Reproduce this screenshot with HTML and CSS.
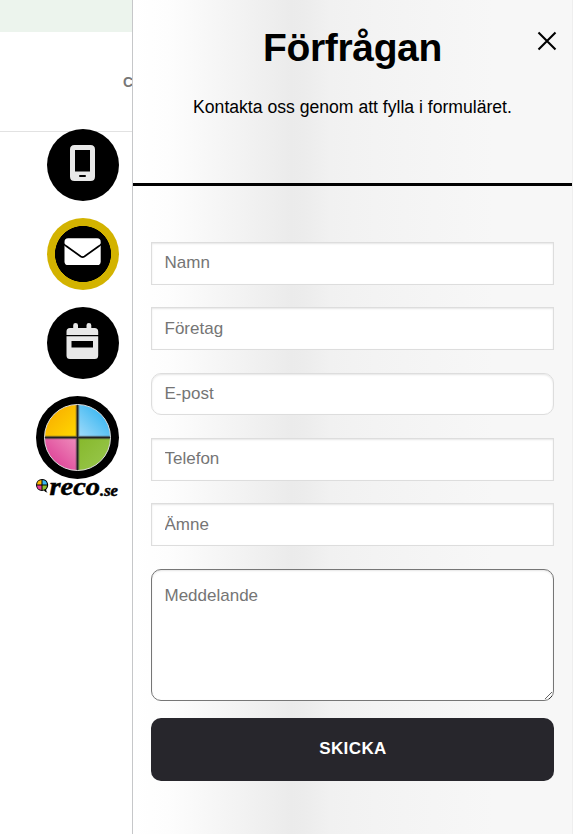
FILE: index.html
```html
<!DOCTYPE html>
<html lang="sv">
<head>
<meta charset="utf-8">
<title>Förfrågan</title>
<link rel="stylesheet" href="styles.css">
</head>
<body>
<div class="page">
  <div class="side">
    <div class="topbar"></div>
    <header class="nav"><span class="nav-link">C</span></header>
    <nav class="actions">
      <a class="action" aria-label="Telefon">
        <svg width="72" height="72" viewBox="0 0 72 72">
          <path fill="#e8e8e8" fill-rule="evenodd" d="M27.500 16h16q4.500 0 4.500 4.500v27q0 4.500-4.500 4.500h-16q-4.500 0-4.500-4.500v-27q0-4.500 4.500-4.500zM28 21v21.500h15V21zM33 46q-1 0-1 1t1 1h5q1 0 1-1t-1-1z"/>
        </svg>
      </a>
      <a class="action action-active" aria-label="E-post">
        <svg width="72" height="72" viewBox="0 0 72 72">
          <rect x="17.500" y="20.300" width="36.200" height="26.700" rx="3.600" fill="#fff"/>
          <path fill="none" stroke="#000" stroke-width="1.700" d="M16.800 26 Q18 27.300 19.500 28.300L33.800 38.500q1.800 1.200 3.600 0L51.700 28.300Q53.200 27.300 54.400 26"/>
        </svg>
      </a>
      <a class="action" aria-label="Kalender">
        <svg width="72" height="72" viewBox="0 0 72 72">
          <path fill="#e8e8e8" d="M26.200 21v-2.700q0-2.300 2.400-2.300t2.400 2.300V21h8.500v-2.700q0-2.300 2.400-2.300t2.400 2.300V21h3.200q3.700 0 3.700 3.500V28H19.500v-3.500q0-3.500 3.500-3.500z"/>
          <path fill="#e8e8e8" fill-rule="evenodd" d="M19.500 29.200H51.200V48.500q0 3.500-3.500 3.500H23q-3.500 0-3.500-3.500zM24.500 34v6.500h21.500V34z"/>
        </svg>
      </a>
      <a class="reco" aria-label="Reco">
        <svg width="84" height="104" viewBox="0 0 84 104">
          <defs>
            <linearGradient id="y" x1="0" y1="0" x2="1" y2="1"><stop offset=".2" stop-color="#f9b000"/><stop offset="1" stop-color="#ffda00"/></linearGradient>
            <linearGradient id="b" x1="0" y1="1" x2="1" y2="0"><stop offset="0" stop-color="#a5dcfa"/><stop offset=".8" stop-color="#38b6f1"/></linearGradient>
            <linearGradient id="p" x1="0" y1="1" x2="1" y2="0"><stop offset=".2" stop-color="#de4297"/><stop offset="1" stop-color="#ef8fbd"/></linearGradient>
            <linearGradient id="g" x1="0" y1="0" x2="1" y2="1"><stop offset="0" stop-color="#86b82b"/><stop offset="1" stop-color="#9ac850"/></linearGradient>
          </defs>
          <circle cx="41.500" cy="41.500" r="41.500"/>
          <path fill="url(#y)" d="M41.500 41.500V8.500a33 33 0 0 0-33 33z"/>
          <path fill="url(#b)" d="M41.500 41.500h33a33 33 0 0 0-33-33z"/>
          <path fill="url(#p)" d="M41.500 41.500h-33a33 33 0 0 0 33 33z"/>
          <path fill="url(#g)" d="M41.500 41.500v33a33 33 0 0 0 33-33z"/>
          <path stroke="#444" stroke-opacity=".55" stroke-width="3.600" d="M41.500 8.500v66M8.500 41.500h66"/>
          <path stroke="#222" stroke-width="1.500" d="M41.500 8.500v66M8.500 41.500h66"/>
          <circle cx="41.500" cy="41.500" r="33" fill="none" stroke="#ddd" stroke-width="1"/>
          <path d="M6 83a6 6 0 0 0 0 12q1 0 2-.4 1 2 3.500 1.800-1.500-1-1.300-3A6 6 0 0 0 6 83z"/>
          <path fill="#ffb800" d="M5.500 88.500V84A4.800 4.800 0 0 0 1 88.500z"/>
          <path fill="#38b6f1" d="M6.500 88.500H11A4.800 4.800 0 0 0 6.500 84z"/>
          <path fill="#e83e97" d="M5.500 89.500H1A4.800 4.800 0 0 0 5.500 94z"/>
          <path fill="#8ec02f" d="M6.500 89.500V94A4.800 4.800 0 0 0 11 89.500z"/>
          <text class="reco-name" x="13.500" y="99" textLength="50.500" lengthAdjust="spacingAndGlyphs">reco</text>
          <text class="reco-tld" x="64" y="99.500" textLength="18" lengthAdjust="spacingAndGlyphs">.se</text>
        </svg>
      </a>
    </nav>
  </div>
  <main class="panel">
    <div class="intro">
      <h1>Förfrågan</h1>
      <p>Kontakta oss genom att fylla i formuläret.</p>
      <button class="close" aria-label="Stäng">
        <svg width="20" height="20" viewBox="0 0 20 20"><path d="M1.500 1.500l17 17M18.500 1.500l-17 17" stroke="#000" stroke-width="2.100"/></svg>
      </button>
    </div>
    <form class="form">
      <input class="field" type="text" placeholder="Namn">
      <input class="field field-low" type="text" placeholder="Företag">
      <input class="field field-low field-email" type="email" placeholder="E-post">
      <input class="field" type="text" placeholder="Telefon">
      <input class="field field-low" type="text" placeholder="Ämne">
      <textarea class="field message" placeholder="Meddelande"></textarea>
      <button class="submit" type="button">SKICKA</button>
    </form>
  </main>
</div>
</body>
</html>
```
FILE: styles.css
```css
* { box-sizing: border-box; }
body {
  margin: 0;
  background: #fff;
  font-family: "Liberation Sans", Arial, sans-serif;
}
.page {
  display: flex;
  height: 834px;
  overflow: hidden;
}
.side {
  flex: 0 0 132px;
  overflow: hidden;
}
.topbar {
  height: 32px;
  background: #ecf4ed;
}
.nav {
  display: flex;
  align-items: center;
  height: 100px;
  padding-left: 123px;
  border-bottom: 1px solid #e2e2e2;
  white-space: nowrap;
}
.nav-link {
  color: #777;
  font-size: 14px;
  font-weight: 700;
}
.actions {
  display: flex;
  flex-direction: column;
  align-items: flex-end;
  gap: 17px;
  margin-top: -3px;
  padding-right: 13px;
}
.action {
  position: relative;
  width: 72px;
  height: 72px;
  border-radius: 50%;
  background: #000;
}
.action svg, .reco svg { display: block; }
.action-active { background: radial-gradient(circle, #000 27.700px, #d3b300 28.300px); }
.reco { margin-right: -1px; }
.reco-name, .reco-tld {
  font-family: "Liberation Serif", serif;
  font-style: italic;
  font-weight: 700;
  stroke: #000;
  stroke-width: .5px;
}
.reco-name { font-size: 26px; }
.reco-tld { font-size: 17px; }
.panel {
  flex: 1;
  border-left: 1px solid #c6c7c9;
  border-right: 1px solid #eee;
  background: linear-gradient(90deg, #fff 0%, #fdfdfd 8%, #f3f3f3 24%, #ebebeb 36%, #ececec 39%, #f1f1f1 45%, #f3f3f3 55%, #f7f7f7 82%);
}
.intro {
  position: relative;
  height: 186px;
  padding-top: 26px;
  border-bottom: 3px solid #000;
  text-align: center;
}
h1 {
  margin: 0;
  font-size: 39px;
  line-height: 44px;
  letter-spacing: -.35px;
}
p {
  margin: 26px 0 0;
  font-size: 17.600px;
  line-height: 22px;
}
.close {
  position: absolute;
  top: 31px;
  right: 15px;
  padding: 0;
  border: 0;
  background: none;
}
.close svg { display: block; }
.form {
  display: flex;
  flex-direction: column;
  padding: 56px 18px 0;
}
.field {
  width: 100%;
  height: 43px;
  margin: 0 0 22.350px;
  padding: 0 12.500px 1px;
  border: 1px solid #ddd;
  border-radius: 0;
  outline: 0;
  background: #fff;
  box-shadow: inset 0 1px 2px rgba(0, 0, 0, .1);
  color: #333;
  font: 17px "Liberation Sans", Arial, sans-serif;
}
.field::placeholder { color: #757575; }
.field-low {
  padding-top: 1px;
  padding-bottom: 0;
}
.field-email {
  height: 42px;
  margin-bottom: 23.350px;
  border-radius: 10px;
}
.message {
  height: 132px;
  margin-bottom: 17px;
  padding-top: 16px;
  border-color: #767676;
  border-radius: 10px;
}
.submit {
  height: 63px;
  padding-left: 7px;
  border: 0;
  border-radius: 10px;
  background: #27262c;
  color: #fff;
  font: 700 17px "Liberation Sans", Arial, sans-serif;
  letter-spacing: .4px;
}
```
